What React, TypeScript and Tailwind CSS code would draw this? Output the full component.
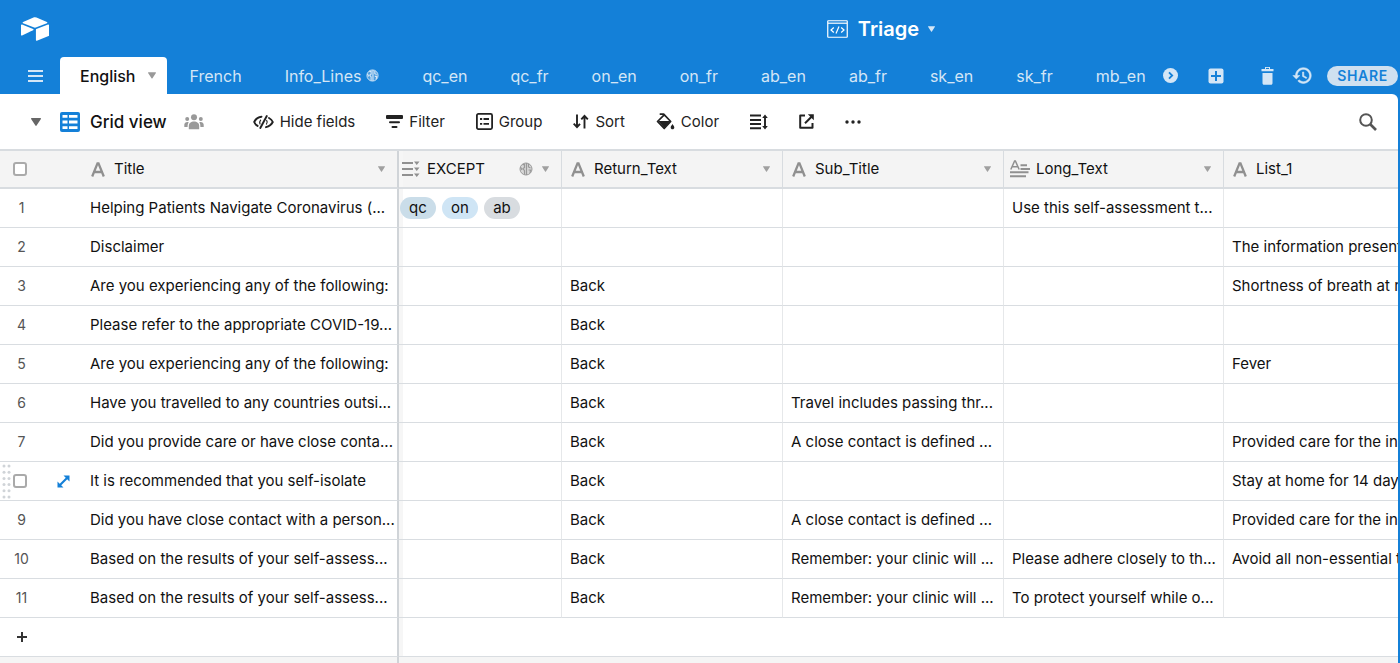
import React from "react";
import { SiAirtable } from "react-icons/si";

type IconProps = { className?: string };

const Caret = ({ className = "" }: IconProps) => (
  <svg viewBox="0 0 10 8" className={className} fill="currentColor" aria-hidden="true">
    <path d="M0.6 0h8.8c.5 0 .7.5.5.9L5.6 7.5c-.3.5-.9.5-1.2 0L.1.9C-.1.5.1 0 .6 0z" />
  </svg>
);

const Globe = ({ className = "" }: IconProps) => (
  <svg viewBox="0 0 14 14" className={className} aria-hidden="true">
    <circle cx="7" cy="7" r="6" fill="currentColor" fillOpacity="0.3" stroke="currentColor" strokeWidth="1" />
    <path d="M7.500 1v12M3.500 2.600h2v3l-1.500 1 1.500 2v4M1.500 5l1.500 3M9.500 2v3l2 1M9.500 8h2l-.5 3" fill="none" stroke="currentColor" strokeWidth="1.2" />
  </svg>
);

const MenuIcon = () => (
  <svg viewBox="0 0 15 12" className="h-3 w-[15px]" aria-hidden="true">
    <path d="M0 1h15M0 6h15M0 11h15" stroke="currentColor" strokeWidth="2" />
  </svg>
);

const CodeWindow = () => (
  <svg viewBox="0 0 21 18" className="h-[18px] w-[21px]" fill="none" stroke="currentColor" aria-hidden="true">
    <rect x="0.75" y="0.75" width="19.500" height="16.500" rx="0.5" strokeWidth="1.2" />
    <path d="M1 3.200h19" strokeWidth="1.2" />
    <path d="M6.800 7.500 4 10l2.800 2.500M14.200 7.500 17 10l-2.800 2.500M12 6.500 9 13.500" strokeWidth="1.2" />
  </svg>
);

const ChevronCircle = () => (
  <svg viewBox="0 0 15 15" className="h-[15px] w-[15px]" aria-hidden="true">
    <circle cx="7.500" cy="7.500" r="7.500" fill="currentColor" />
    <path d="M6 4.300 9.200 7.500 6 10.700" fill="none" stroke="#1480d8" strokeWidth="1.8" />
  </svg>
);

const PlusBox = () => (
  <svg viewBox="0 0 16 16" className="h-4 w-4" aria-hidden="true">
    <rect x="0.5" y="0.5" width="15" height="15" rx="2" fill="currentColor" />
    <path d="M8 3v10M3 8h10" stroke="#1480d8" strokeWidth="2" />
  </svg>
);

const Trash = () => (
  <svg viewBox="0 0 13 18" className="h-[18px] w-[13px]" fill="currentColor" aria-hidden="true">
    <path d="M4 0h5v2h3.500v2.200H.5V2H4z" />
    <path d="M5 .9h3V2H5z" fill="#1480d8" />
    <path d="M1.500 6h10v10.300c0 .9-.6 1.500-1.500 1.500H3c-.9 0-1.500-.6-1.500-1.500z" />
  </svg>
);

const History = () => (
  <svg viewBox="0 0 24 24" className="h-[21px] w-[21px]" fill="currentColor" aria-hidden="true">
    <path d="M13 3c-4.970 0-9 4.030-9 9H1l3.890 3.890.07.14L9 12H6c0-3.870 3.130-7 7-7s7 3.130 7 7-3.130 7-7 7c-1.930 0-3.680-.79-4.940-2.060l-1.420 1.420C8.270 19.990 10.510 21 13 21c4.970 0 9-4.030 9-9s-4.030-9-9-9zm-1 5v5l4.280 2.540.72-1.210-3.500-2.080V8H12z" stroke="currentColor" strokeWidth="0.6" />
  </svg>
);

const GridIcon = () => (
  <svg viewBox="0 0 20 20" className="h-5 w-5" aria-hidden="true">
    <rect width="20" height="20" rx="2" fill="#1480d8" />
    <path d="M2.500 3h5v2.800h-5zM9 3h8.500v2.800H9zM2.500 8.600h5v2.800h-5zM9 8.600h8.500v2.800H9zM2.500 14.200h5V17h-5zM9 14.200h8.500V17H9z" fill="#fff" />
  </svg>
);

const People = () => (
  <svg viewBox="0 0 20 16" className="h-4 w-5" fill="currentColor" aria-hidden="true">
    <circle cx="10" cy="3.200" r="3" />
    <circle cx="3.200" cy="5" r="2" />
    <circle cx="16.800" cy="5" r="2" />
    <path d="M4.800 15.300V12c0-3 2.200-4.600 5.200-4.600s5.200 1.600 5.200 4.600v3.300z" />
    <path d="M.3 13v-2.200C.3 9 1.600 7.900 3.300 7.900c.6 0 1 .1 1.400.3C3.900 9.400 3.600 10.600 3.600 13zM19.700 13v-2.200c0-1.800-1.300-2.900-3-2.900-.6 0-1 .1-1.400.3.8 1.200 1.100 2.400 1.100 4.800z" />
  </svg>
);

const HideIcon = () => (
  <svg viewBox="0 0 21 16" className="h-4 w-[21px]" fill="none" stroke="currentColor" strokeWidth="1.900" strokeLinecap="round" aria-hidden="true">
    <path d="M8.500 2.700C5.200 3.200 2.400 5.300 1.200 8c.6 1.500 1.800 2.900 3.400 3.900M13 13.200c3-.8 5.600-2.800 6.800-5.200-.7-1.700-2-3.100-3.800-4" />
    <path d="M13.800 2 7.300 14" />
    <path d="M7.600 6.200C6.500 7.500 6.500 8.800 7 10M13.700 6.500c.8 1.200.6 2.500-.2 3.500" strokeWidth="1.200" />
  </svg>
);

const FilterIcon = () => (
  <svg viewBox="0 0 17 14" className="h-[14px] w-[17px]" fill="currentColor" aria-hidden="true">
    <rect x="0" y="0" width="17" height="4" rx="1" />
    <rect x="3" y="6.200" width="11" height="2" rx="1" />
    <rect x="5.500" y="11" width="6" height="2" rx="1" />
  </svg>
);

const GroupIcon = () => (
  <svg viewBox="0 0 17 17" className="h-[17px] w-[17px]" fill="none" stroke="currentColor" strokeWidth="1.800" aria-hidden="true">
    <rect x="0.900" y="0.900" width="15.200" height="15.200" rx="1.500" />
    <path d="M4 6h2.200M7.500 6H13M4 10.800h2.200M7.500 10.800H13" />
  </svg>
);

const SortIcon = () => (
  <svg viewBox="0 0 16 15" className="h-[15px] w-4" fill="none" stroke="currentColor" strokeWidth="1.900" aria-hidden="true">
    <path d="M4 .5v12.500M.7 9.700 4 13.200l3-3.400M11.500 14.500V2M8.300 5.400l3.200-3.600 3.300 3.600" />
  </svg>
);

const PaintIcon = () => (
  <svg viewBox="0 0 19 17" className="h-[17px] w-[19px]" aria-hidden="true">
    <path d="M3.700 1.200h4l7 7.300-6.500 7L1.500 8.500l6.200-6.200" fill="none" stroke="currentColor" strokeWidth="1.700" strokeLinejoin="round" />
    <path d="M2 8h12.500l-6.300 7z" fill="currentColor" />
    <path d="M16.500 11c1.200 1.700 1.800 2.600 1.800 3.500 0 1-.8 1.800-1.800 1.800s-1.800-.8-1.800-1.800c0-.9.600-1.800 1.800-3.500z" fill="currentColor" />
  </svg>
);

const RowHeightIcon = () => (
  <svg viewBox="0 0 18 16" className="h-4 w-[18px]" aria-hidden="true">
    <path d="M0 1.500h11M0 6h11M0 10h11M0 14.300h11" stroke="currentColor" strokeWidth="1.900" />
    <path d="M15 2.500v11" stroke="currentColor" strokeWidth="1.900" />
    <path d="M15 .4 17.800 4h-5.600zM15 15.600l2.800-3.600h-5.600z" fill="currentColor" />
  </svg>
);

const ShareViewIcon = () => (
  <svg viewBox="0 0 15 15" className="h-[15px] w-[15px]" fill="none" stroke="currentColor" strokeWidth="2" aria-hidden="true">
    <path d="M6 1.500H1.200v12.300h12.300V9" strokeLinejoin="round" />
    <path d="M6 9.300 12.800 2.500" />
    <path d="M8.800.3h6v6z" fill="currentColor" stroke="none" />
  </svg>
);

const DotsIcon = () => (
  <svg viewBox="0 0 16 4" className="h-1 w-4" fill="currentColor" aria-hidden="true">
    <circle cx="2" cy="2" r="1.700" />
    <circle cx="8" cy="2" r="1.700" />
    <circle cx="14" cy="2" r="1.700" />
  </svg>
);

const SearchIcon = () => (
  <svg viewBox="0 0 18 18" className="h-[18px] w-[18px]" fill="none" stroke="currentColor" aria-hidden="true">
    <circle cx="7" cy="7" r="5.800" strokeWidth="2" />
    <path d="m11 11 6 6" strokeWidth="2.600" />
  </svg>
);

const TextIcon = () => (
  <svg viewBox="0 0 14 15" className="h-[15px] w-[14px]" fill="none" stroke="currentColor" strokeWidth="2.300" aria-hidden="true">
    <path d="M1.200 14.500 6.500 1.300h1L12.800 14.500M3 10h8" />
  </svg>
);

const MultiSelectIcon = () => (
  <svg viewBox="0 0 18 16" className="h-4 w-[18px]" aria-hidden="true">
    <path d="M0 2h11M0 8h11M0 14h11" stroke="currentColor" strokeWidth="2" />
    <path d="M12 .5h5.500L14.750 4zM12 6.500h5.500L14.750 10zM12 12.500h5.500L14.750 16z" fill="currentColor" />
  </svg>
);

const LongTextIcon = () => (
  <svg viewBox="0 0 20 18" className="h-[18px] w-5" fill="none" stroke="currentColor" aria-hidden="true">
    <path d="M.8 9.500 4.600 1h.8L9.200 9.500M2 6.700h6" strokeWidth="1.500" />
    <path d="M10.500 5.300H17M10.500 9H20M0 12.300h18.500M0 16.300h16" strokeWidth="1.900" />
  </svg>
);

const ExpandIcon = () => (
  <svg viewBox="0 0 13 13" className="h-[13px] w-[13px]" aria-hidden="true">
    <path d="M6.500 0.500H12.500V6.500zM.5 6.500V12.500H6.500z" fill="#1480d8" />
    <path d="M3 10 10 3" stroke="#1480d8" strokeWidth="2.200" />
  </svg>
);

const DragDots = () => (
  <svg viewBox="0 0 9 35" className="h-[35px] w-[9px]" fill="#d0d4d8" aria-hidden="true">
    {[2, 8.2, 14.4, 20.6, 26.8, 33].map((y) => (
      <g key={y}>
        <circle cx="2" cy={y} r="1.500" />
        <circle cx="7" cy={y} r="1.500" />
      </g>
    ))}
  </svg>
);

const tabs = ["French", "Info_Lines", "qc_en", "qc_fr", "on_en", "on_fr", "ab_en", "ab_fr", "sk_en", "sk_fr", "mb_en"];

const tools: { label: string; icon: React.ReactNode }[] = [
  { label: "Hide fields", icon: <HideIcon /> },
  { label: "Filter", icon: <FilterIcon /> },
  { label: "Group", icon: <GroupIcon /> },
  { label: "Sort", icon: <SortIcon /> },
  { label: "Color", icon: <PaintIcon /> },
];

type Row = { title: string; tags?: boolean; back?: boolean; sub?: string; long?: string; list?: string };

const rows: Row[] = [
  { title: "Helping Patients Navigate Coronavirus (...", tags: true, long: "Use this self-assessment t..." },
  { title: "Disclaimer", list: "The information present" },
  { title: "Are you experiencing any of the following:", back: true, list: "Shortness of breath at r" },
  { title: "Please refer to the appropriate COVID-19...", back: true },
  { title: "Are you experiencing any of the following:", back: true, list: "Fever" },
  { title: "Have you travelled to any countries outsi...", back: true, sub: "Travel includes passing thr..." },
  { title: "Did you provide care or have close conta...", back: true, sub: "A close contact is defined ...", list: "Provided care for the in" },
  { title: "It is recommended that you self-isolate", back: true, list: "Stay at home for 14 day" },
  { title: "Did you have close contact with a person...", back: true, sub: "A close contact is defined ...", list: "Provided care for the in" },
  { title: "Based on the results of your self-assess...", back: true, sub: "Remember: your clinic will ...", long: "Please adhere closely to th...", list: "Avoid all non-essential t" },
  { title: "Based on the results of your self-assess...", back: true, sub: "Remember: your clinic will ...", long: "To protect yourself while o..." },
];

const Checkbox = ({ label }: { label: string }) => (
  <input
    type="checkbox"
    aria-label={label}
    className="block h-[14px] w-[14px] appearance-none rounded-[3px] border-2 border-[#aaa] bg-white"
  />
);

const headCell = "border-b-2 border-[#d8dce0] bg-[#f4f4f4] p-0 text-left font-normal";
const bodyCell = "overflow-hidden border-b border-[#d9dde1] p-0 pl-2 whitespace-nowrap";
const divider = "border-r border-r-[#e6e8ea]";
const frozen = "border-r-2 border-r-[#d0d4d8]";
const frozenShade = "shadow-[inset_4px_0_0_#f6f6f6]";

type HeadLabelProps = { icon: React.ReactNode; name: string; menu?: boolean; globe?: boolean; pad?: string; slot?: string };

const HeadLabel = ({ icon, name, menu = true, globe = false, pad = "pl-[9px]", slot = "w-[23px]" }: HeadLabelProps) => (
  <div className={`flex items-center pr-3 ${pad}`}>
    <span className={`flex text-[#909090] ${slot}`}>{icon}</span>
    <span className="flex-1">{name}</span>
    {globe && <Globe className="mr-[9px] h-[14px] w-[14px] text-[#999]" />}
    {menu && (
      <button aria-label={`${name} options`} className="text-[#a0a0a0]">
        <Caret className="h-[6px] w-[7px]" />
      </button>
    )}
  </div>
);

export default function App() {
  return (
    <div className="flex min-h-screen flex-col overflow-hidden bg-[#1480d8] pr-[2px] font-['Inter','Liberation_Sans',sans-serif] text-[15px] leading-5 text-[#111]">
      <header className="text-[#d4e6f6]">
        <div className="flex h-[57px] items-center px-[21px]">
          <a href="#home" aria-label="Home" className="text-white">
            <SiAirtable className="h-7 w-7" />
          </a>
          <button className="mx-auto flex items-center pl-[336px] text-xl font-semibold text-white">
            <CodeWindow />
            <span className="mr-[9px] ml-[10px]">Triage</span>
            <Caret className="h-[6px] w-[7px] text-[#d4e6f6]" />
          </button>
        </div>
        <nav className="flex h-[37px] items-center text-base">
          <button aria-label="All tables" className="flex w-[60px] justify-center pl-[11px]">
            <MenuIcon />
          </button>
          <button className="flex h-full items-center rounded-t-[4px] bg-white pr-[11px] pl-5 font-medium text-[#111]">
            English
            <Caret className="ml-3 h-[7px] w-2 text-[#999]" />
          </button>
          <div className="ml-[23px] flex gap-[43px] text-base">
            {tabs.map((tab) => (
              <a key={tab} href={`#${tab}`} className="flex items-center">
                {tab}
                {tab === "Info_Lines" && <Globe className="ml-[5px] h-[13px] w-[13px]" />}
              </a>
            ))}
          </div>
          <div className="ml-auto flex items-center">
            <button aria-label="More tables"><ChevronCircle /></button>
            <button aria-label="Add table" className="ml-[30px]"><PlusBox /></button>
            <button aria-label="Trash" className="ml-[37px]"><Trash /></button>
            <button aria-label="History" className="ml-[18px]"><History /></button>
            <button className="ml-[14px] h-5 rounded-full bg-[#cfe0f0] px-[10px] text-sm leading-5 font-semibold tracking-wider text-[#1480d8]">
              SHARE
            </button>
          </div>
        </nav>
      </header>

      <main className="flex flex-1 flex-col overflow-hidden rounded-tr-[6px] bg-white">
        <div className="flex h-[55px] items-center pr-[21px] pl-[31px]">
          <button aria-label="Toggle views" className="text-[#666]">
            <Caret className="h-2 w-[10px]" />
          </button>
          <button className="ml-[19px] flex items-center text-[17px] font-medium">
            <GridIcon />
            <span className="ml-[10px]">Grid view</span>
          </button>
          <button aria-label="Collaborative view" className="ml-[17px] text-[#999]">
            <People />
          </button>
          <div className="ml-[49px] flex items-center gap-[31px] text-[15px] text-[#222]">
            {tools.map((tool) => (
              <button key={tool.label} className="flex items-center gap-[6px]">
                {tool.icon}
                {tool.label}
              </button>
            ))}
            <button aria-label="Row height"><RowHeightIcon /></button>
            <button aria-label="Share view"><ShareViewIcon /></button>
            <button aria-label="More options"><DotsIcon /></button>
          </div>
          <button aria-label="Search" className="ml-auto text-[#555]">
            <SearchIcon />
          </button>
        </div>

        <table className="w-full table-fixed border-separate border-spacing-0 border-t-2 border-[#d8dce0]">
          <colgroup>
            <col className="w-[82px]" />
            <col className="w-[317px]" />
            <col className="w-[163px]" />
            <col className="w-[221px]" />
            <col className="w-[221px]" />
            <col className="w-[220px]" />
            <col />
          </colgroup>
          <thead>
            <tr className="h-[38px]">
              <th className={`${headCell} pl-[13px]`}><Checkbox label="Select all" /></th>
              <th className={`${headCell} ${frozen}`}><HeadLabel icon={<TextIcon />} name="Title" /></th>
              <th className={`${headCell} border-r border-r-[#d8dce0] ${frozenShade}`}>
                <HeadLabel icon={<MultiSelectIcon />} name="EXCEPT" globe pad="pl-[3px]" slot="w-[25px]" />
              </th>
              <th className={`${headCell} border-r border-r-[#d8dce0]`}><HeadLabel icon={<TextIcon />} name="Return_Text" /></th>
              <th className={`${headCell} border-r border-r-[#d8dce0]`}><HeadLabel icon={<TextIcon />} name="Sub_Title" /></th>
              <th className={`${headCell} border-r border-r-[#d8dce0]`}>
                <HeadLabel icon={<LongTextIcon />} name="Long_Text" pad="pl-[6px]" slot="w-[26px]" />
              </th>
              <th className={headCell}><HeadLabel icon={<TextIcon />} name="List_1" menu={false} /></th>
            </tr>
          </thead>
          <tbody>
            {rows.map((row, i) => (
              <tr key={i} className="h-[39px]">
                <td className="border-b border-[#d9dde1] p-0 text-sm text-[#555]">
                  {i === 7 ? (
                    <div className="flex items-center pl-[2px]">
                      <DragDots />
                      <span className="ml-[2px]"><Checkbox label="Select row 8" /></span>
                      <button aria-label="Expand record" className="ml-[30px]"><ExpandIcon /></button>
                    </div>
                  ) : (
                    <div className="w-[43px] text-center">{i + 1}</div>
                  )}
                </td>
                <td className={`${bodyCell} ${frozen}`}>{row.title}</td>
                <td className={`${bodyCell} ${divider} ${frozenShade}`}>
                  {row.tags && (
                    <div className="-ml-[7px] flex gap-[6px] leading-[22px]">
                      <span className="w-9 rounded-full bg-[#cadde9] text-center">qc</span>
                      <span className="w-9 rounded-full bg-[#cfe5f5] text-center">on</span>
                      <span className="w-9 rounded-full bg-[#d8dce0] text-center">ab</span>
                    </div>
                  )}
                </td>
                <td className={`${bodyCell} ${divider}`}>{row.back && "Back"}</td>
                <td className={`${bodyCell} ${divider}`}>{row.sub}</td>
                <td className={`${bodyCell} ${divider}`}>{row.long}</td>
                <td className={bodyCell}>{row.list}</td>
              </tr>
            ))}
            <tr className="h-[39px]">
              <td colSpan={2} className={`border-b border-b-[#d9dde1] p-0 ${frozen}`}>
                <button aria-label="Add row" className="flex w-[43px] justify-center text-[#333]">
                  <svg viewBox="0 0 10 10" className="h-[10px] w-[10px]" aria-hidden="true">
                    <path d="M5 0v10M0 5h10" stroke="currentColor" strokeWidth="2" />
                  </svg>
                </button>
              </td>
              <td colSpan={5} className={`border-b border-[#d9dde1] p-0 ${frozenShade}`} />
            </tr>
          </tbody>
        </table>
        <div className="flex flex-1 bg-[#f5f5f5]">
          <div className="w-[399px] border-r-2 border-[#d0d4d8]" />
        </div>
      </main>
    </div>
  );
}
